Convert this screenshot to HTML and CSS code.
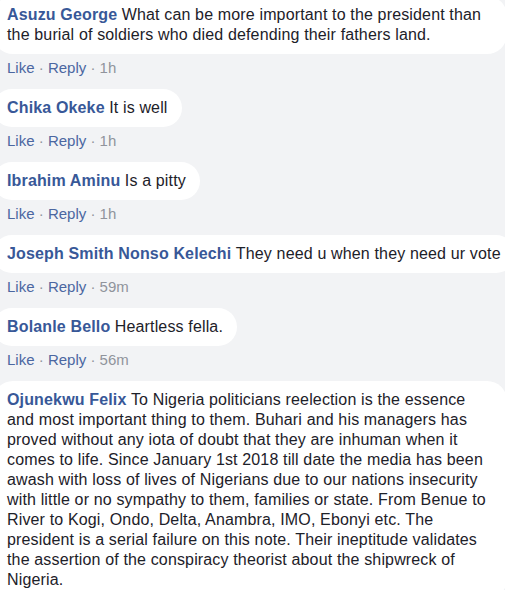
FILE: index.html
```html
<!DOCTYPE html>
<html>
<head>
<meta charset="utf-8">
<link rel="stylesheet" href="styles.css">
</head>
<body>
<div class="list">
  <div class="comment">
    <div class="bubble multi"><a class="name">Asuzu George</a> <span class="text">What can be more important to the president than<br>the burial of soldiers who died defending their fathers land.</span></div>
    <div class="actions"><a>Like</a> <span class="sep">·</span> <a>Reply</a> <span class="sep">·</span> <span class="time">1h</span></div>
  </div>
  <div class="comment">
    <div class="bubble"><a class="name">Chika Okeke</a> <span class="text">It is well</span></div>
    <div class="actions"><a>Like</a> <span class="sep">·</span> <a>Reply</a> <span class="sep">·</span> <span class="time">1h</span></div>
  </div>
  <div class="comment">
    <div class="bubble"><a class="name">Ibrahim Aminu</a> <span class="text">Is a pitty</span></div>
    <div class="actions"><a>Like</a> <span class="sep">·</span> <a>Reply</a> <span class="sep">·</span> <span class="time">1h</span></div>
  </div>
  <div class="comment">
    <div class="bubble"><a class="name">Joseph Smith Nonso Kelechi</a> <span class="text">They need u when they need ur vote</span></div>
    <div class="actions"><a>Like</a> <span class="sep">·</span> <a>Reply</a> <span class="sep">·</span> <span class="time">59m</span></div>
  </div>
  <div class="comment">
    <div class="bubble"><a class="name">Bolanle Bello</a> <span class="text">Heartless fella.</span></div>
    <div class="actions"><a>Like</a> <span class="sep">·</span> <a>Reply</a> <span class="sep">·</span> <span class="time">56m</span></div>
  </div>
  <div class="comment">
    <div class="bubble multi"><a class="name">Ojunekwu Felix</a> <span class="text">To Nigeria politicians reelection is the essence<br>and most important thing to them. Buhari and his managers has<br>proved without any iota of doubt that they are inhuman when it<br>comes to life. Since January 1st 2018 till date the media has been<br>awash with loss of lives of Nigerians due to our nations insecurity<br>with little or no sympathy to them, families or state. From Benue to<br>River to Kogi, Ondo, Delta, Anambra, IMO, Ebonyi etc. The<br>president is a serial failure on this note. Their ineptitude validates<br>the assertion of the conspiracy theorist about the shipwreck of<br>Nigeria.</span></div>
  </div>
</div>
</body>
</html>
```
FILE: styles.css
```css
html, body {
  margin: 0;
  padding: 0;
  background: #f2f3f5;
  overflow: hidden;
}

body {
  font-family: "Liberation Sans", Arial, sans-serif;
  color: #1d2129;
}

.list {
  margin: -4px 0 0 -7px;
}

.bubble {
  display: inline-block;
  background: #ffffff;
  border-radius: 20px;
  padding: 9px 14px;
  max-width: 512px;
  font-size: 16px;
  line-height: 20px;
  color: #1d2129;
  white-space: nowrap;
}

.bubble.multi {
  width: 486px;
}

.name {
  color: #385898;
  font-weight: bold;
  letter-spacing: 0.15px;
}

.text {
  color: #1d2129;
  letter-spacing: 0.15px;
}

.actions {
  padding: 5px 0 0 14px;
  margin-bottom: 13px;
  font-size: 15px;
  line-height: 17px;
  color: #90949c;
}

.actions a {
  color: #4b67a1;
}

.sep, .time {
  color: #90949c;
}
```
